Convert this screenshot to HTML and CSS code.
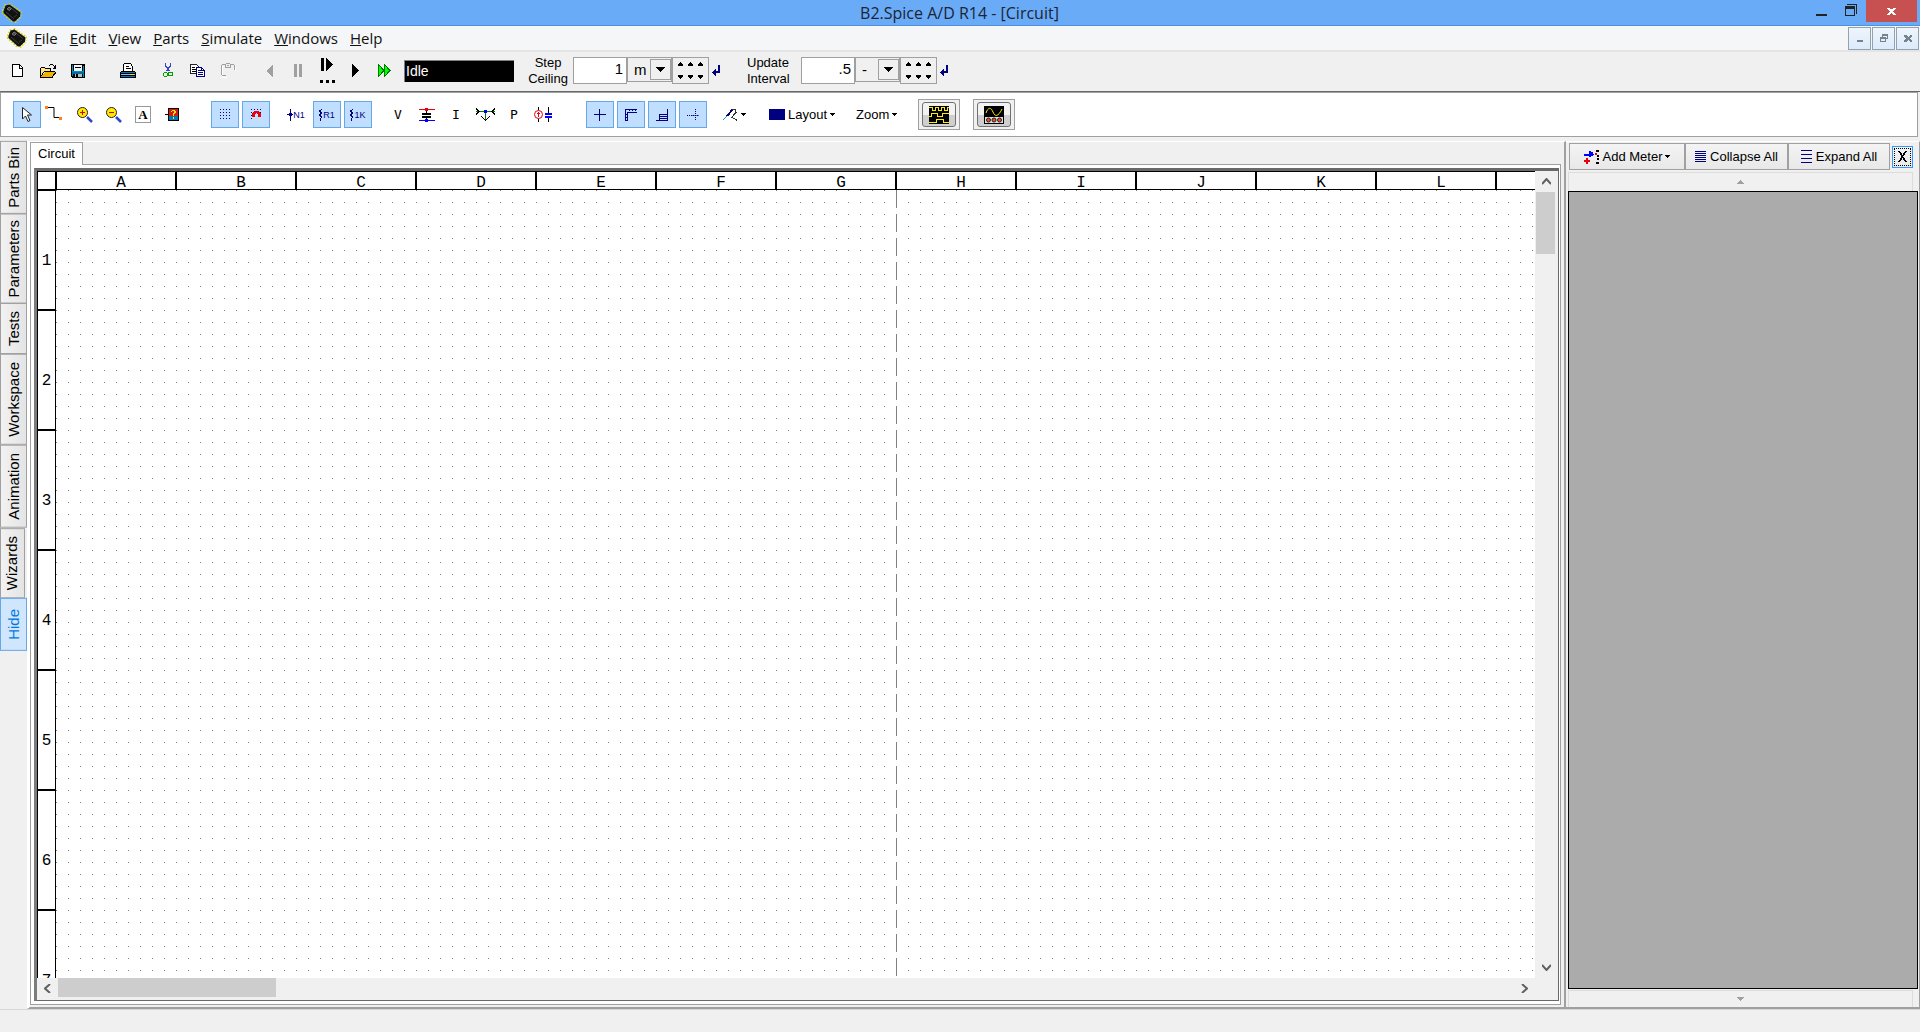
FILE: index.html
```html
<!DOCTYPE html>
<html lang="en">
<head>
    <meta charset="UTF-8">
    <meta name="viewport" content="width=device-width, initial-scale=1.0">
    <title>B2.Spice A/D R14 - [Circuit]</title>
    <link rel="stylesheet" href="styles.css">
</head>
<body>
    <svg class="defs" width="0" height="0" aria-hidden="true">
        <symbol id="chip" viewBox="0 0 20 20">
            <path d="M6.500 1 19.500 10M.5 9 11.500 19" stroke="#d8d000" stroke-width="3" stroke-dasharray="1.600 1.400"/>
            <path d="M.5 8 4 1M13 19.500l6.500-7" stroke="#e6dc00" stroke-width="2" stroke-dasharray="1.500 1.500"/>
            <path d="M1.500 8 3.500 2.500 7.500 1.500 18.500 9.500 18 13.500 13 18.500H11L1.500 10z" fill="#111"/>
            <path d="M5 6l2-2 2.500 1.500-2 2z" stroke="#777" fill="#444"/>
            <path d="M4 9l8 7M10 6l6 4.500M12 14l3-2" stroke="#3c3c3c"/>
        </symbol>
        <symbol id="up" viewBox="0 0 5 4"><path d="M2 0h1v1h1v1h1v2H0V2h1V1h1z"/></symbol>
        <symbol id="down" viewBox="0 0 5 4"><path d="M0 0h5v2H4v1H3v1H2V3H1V2H0z"/></symbol>
        <symbol id="drop" viewBox="0 0 9 5"><path d="M0 0h9v1H8v1H7v1H6v1H5v1H4V4H3V3H2V2H1V1H0z"/></symbol>
        <symbol id="caret" viewBox="0 0 5 3"><path d="M0 0h5v1H4v1H3v1H2V2H1V1H0z"/></symbol>
        <symbol id="enter" viewBox="0 0 9 11"><path d="M6 0h2v8H4v3H3v-1H2V9H1V8H0V7h1V6h1V5h1V4h1v2h2z" fill="#000080"/></symbol>
    </svg>

    <header class="titlebar">
        <svg class="chip" width="20" height="20"><use href="#chip"/></svg>
        <h1>B2.Spice A/D R14 - [Circuit]</h1>
        <div class="window-buttons">
            <button aria-label="Minimize"><svg width="11" height="12"><path d="M0 10h11v2H0z" fill="#222"/></svg></button>
            <button aria-label="Restore"><svg width="12" height="12"><path d="M2 0h10v10h-1V1H2zM0 2h10v10H0zM1 5v6h8V5z" fill="#222" fill-rule="evenodd"/></svg></button>
            <button class="close" aria-label="Close"><svg width="9" height="7"><path d="M0 0h3v1h3V0h3v1H8v1H7v1H6v1h1v1h1v1h1v1H6V6H5V5H4v1H3v1H0V6h1V5h1V4h1V3H2V2H1V1H0z" fill="#fff"/></svg></button>
        </div>
    </header>

    <nav class="menubar">
        <svg class="chip" width="20" height="20"><use href="#chip"/></svg>
        <a href="#file"><u>F</u>ile</a>
        <a href="#edit"><u>E</u>dit</a>
        <a href="#view"><u>V</u>iew</a>
        <a href="#parts"><u>P</u>arts</a>
        <a href="#simulate"><u>S</u>imulate</a>
        <a href="#windows"><u>W</u>indows</a>
        <a href="#help"><u>H</u>elp</a>
        <div class="child-buttons">
            <button aria-label="Minimize circuit"><svg width="6" height="8"><path d="M0 6h6v2H0z"/></svg></button>
            <button aria-label="Restore circuit"><svg width="8" height="8"><path d="M2 0h6v5H6V4h1V2H3v1H2zM0 3h6v5H0zM1 5v2h4V5z" fill-rule="evenodd"/></svg></button>
            <button aria-label="Close circuit"><svg width="8" height="7"><path d="M0 0h2l2 2 2-2h2v1L6 3.500 8 6v1H6L4 5 2 7H0V6l2-2.500L0 1z"/></svg></button>
        </div>
    </nav>

    <div class="toolbar main-toolbar">
        <div class="group file-group">
            <button aria-label="New"><svg width="12" height="14"><path d="M.5.500h7l3 3v9H.5z" fill="#fff" stroke="#000"/><path d="M7 1v3h4" fill="none" stroke="#000"/></svg></button>
            <button aria-label="Open"><svg width="16" height="14"><path d="M1 12V4h1V3h3v1h6v3H5z" fill="#ffe680"/><path d="M0 4h1v9H0zM1 3h4v1H1zM5 4h6v1H5zM10 5h1v2h-1zM4 7h11v1H4zM3 8h1v1H3zM2 9h1v2H2zM1 11h1v2H1z"/><path d="M5 8h10v1l-3 4H1l3-4z" fill="#f0b400"/><path d="M15 8h1v1l-3 4v1H0v-1h12zM9 1h1V0h3v1h1v1h1V1h1v4h-3V4h1V2h-1V1h-3v1H9z"/></svg></button>
            <button aria-label="Save"><svg width="14" height="14"><path d="M0 0h14v14H1l-1-1z"/><path d="M1 1h1v11H1zM12 2h1v11h-1zM2 7h10v1H2z" fill="#0090c0"/><path d="M3 1h8v6H3z" fill="#f4f4f4"/><path d="M1 8h12v2H1z" fill="#006eaa"/><path d="M4 10h7v3H4z" fill="#bbb"/><path d="M5 10h2v3H5zM4 3h6v1H4z"/></svg></button>
        </div>
        <div class="group">
            <button aria-label="Print"><svg width="16" height="16"><path d="M3 8V3l3-3h5l2 3v6H3z" fill="#fff"/><path d="M4 0h7v1H4zM3 1h1v7H3zM11 1h1v2h-1zM12 3h1v5h-1zM6 3h3v1H6zM6 5h5v1H6zM1 8h14v1h1v6H0V9h1z"/><path d="M1 9h14v1H1z" fill="#1070c0"/><path d="M1 11h14v1H1z" fill="#79bff0"/><path d="M10 11h4v1h-4z" fill="#ffe000"/><path d="M1 13h14v1H1z" fill="#1070c0"/></svg></button>
        </div>
        <div class="group edit-group">
            <button aria-label="Cut"><svg width="10" height="15"><path d="M2.500 0v3l4 5M7.500 0v3l-4 5" stroke="#3346c8" fill="none" stroke-width="1.400"/><circle cx="2.500" cy="11.500" r="2" stroke="#00a000" fill="none"/><circle cx="7.500" cy="11" r="2" stroke="#00a000" fill="none"/></svg></button>
            <button aria-label="Copy"><svg width="16" height="14"><path d="M.5.500h6l2 2v7h-8z" fill="#fff" stroke="#222"/><path d="M2 3h3v1H2zM2 5h4v1H2zM2 7h4v1H2z"/><path d="M6.500 3.500h5l3 3v6h-8z" fill="#fff" stroke="#000080"/><path d="M8 6h3v1H8zM8 8h5v1H8zM8 10h5v1H8zM11 4v3h3V6h-2V4z" fill="#000080"/></svg></button>
            <button aria-label="Paste" disabled><svg width="15" height="15"><path d="M1 3h1v11h4v1H1zM14 4h1v4h-1z" fill="#fff"/><path d="M0 2h1v10H0zM1 1h3v1H1zM10 1h3v1h-3zM13 2h1v5h-1zM5 0h4v1H5zM4 1h1v3H4zM9 1h1v3H9zM4 4h6v1H4zM1 12h4v1H1zM6 2h2v1H6z" fill="#a0a0a0"/></svg></button>
        </div>
        <div class="group run-group">
            <button aria-label="Step back" disabled><svg width="8" height="14"><path d="M7 1v13H6z" fill="#fff"/><path d="M0 7l7-7v13z" fill="#a0a0a0"/></svg></button>
            <button aria-label="Pause" disabled><svg width="9" height="13"><path d="M0 0h3v13H0zM5 0h3v13H5z" fill="#a0a0a0"/></svg></button>
            <button class="step" aria-label="Step"><svg width="15" height="25"><path d="M1 0h3v13H1zM6 0l7 6v1l-7 6zM0 22h3v3H0zM6 22h3v3H6zM12 22h3v3h-3z"/></svg></button>
            <button aria-label="Run"><svg width="8" height="13"><path d="M0 0l7 6v1l-7 6z"/></svg></button>
            <button aria-label="Fast run"><svg width="13" height="13"><path d="M.5.500L6 6.500l-5.500 6zM6.500.500l5.500 6-5.500 6z" fill="#0f0" stroke="#007800"/></svg></button>
        </div>
        <input class="status" type="text" value="Idle" aria-label="Status" readonly>
        <label for="step">Step<br>Ceiling</label>
        <div class="stepper">
            <input id="step" type="text" value="1">
            <span class="unit">
                <select aria-label="Step unit"><option>m</option></select>
                <svg width="9" height="5"><use href="#drop"/></svg>
            </span>
            <span class="spin">
                <button aria-label="Step up, coarse"><svg width="5" height="4"><use href="#up"/></svg></button>
                <button aria-label="Step up"><svg width="5" height="4"><use href="#up"/></svg></button>
                <button aria-label="Step up, fine"><svg width="5" height="4"><use href="#up"/></svg></button>
                <button aria-label="Step down, coarse"><svg width="5" height="4"><use href="#down"/></svg></button>
                <button aria-label="Step down"><svg width="5" height="4"><use href="#down"/></svg></button>
                <button aria-label="Step down, fine"><svg width="5" height="4"><use href="#down"/></svg></button>
            </span>
            <button class="enter" aria-label="Apply step"><svg width="9" height="11"><use href="#enter"/></svg></button>
        </div>
        <label class="update-label" for="update">Update<br>Interval</label>
        <div class="stepper">
            <input id="update" type="text" value=".5">
            <span class="unit">
                <select aria-label="Update unit"><option>-</option></select>
                <svg width="9" height="5"><use href="#drop"/></svg>
            </span>
            <span class="spin">
                <button aria-label="Update up, coarse"><svg width="5" height="4"><use href="#up"/></svg></button>
                <button aria-label="Update up"><svg width="5" height="4"><use href="#up"/></svg></button>
                <button aria-label="Update up, fine"><svg width="5" height="4"><use href="#up"/></svg></button>
                <button aria-label="Update down, coarse"><svg width="5" height="4"><use href="#down"/></svg></button>
                <button aria-label="Update down"><svg width="5" height="4"><use href="#down"/></svg></button>
                <button aria-label="Update down, fine"><svg width="5" height="4"><use href="#down"/></svg></button>
            </span>
            <button class="enter" aria-label="Apply update"><svg width="9" height="11"><use href="#enter"/></svg></button>
        </div>
    </div>

    <div class="toolbar draw-toolbar">
        <div class="group pointer-group">
            <button class="on" aria-label="Select"><svg width="10" height="16"><path d="M.5.500v11.500l3-3 2.500 5.500 2-1-2.500-5.500H9.500z" fill="#fff" stroke="#222"/></svg></button>
            <button aria-label="Wire"><svg class="raise" width="18" height="20"><path d="M3 2.500h6v10h5" fill="none" stroke="#000"/><path d="M0 1h3v3H0zM14 12h3v3h-3z" fill="#ff7f27"/></svg></button>
            <button aria-label="Zoom in"><svg width="16" height="16"><path d="M10 10l5 5" stroke="#3346c8" stroke-width="2.500"/><circle cx="5.500" cy="5.500" r="5" fill="#ffee00" stroke="#222"/><path d="M5 3h1v2h2v1H6v2H5V6H3V5h2z" fill="#e00000"/></svg></button>
            <button aria-label="Zoom out"><svg width="16" height="16"><path d="M10 10l5 5" stroke="#3346c8" stroke-width="2.500"/><circle cx="5.500" cy="5.500" r="5" fill="#ffee00" stroke="#222"/><path d="M3 5h5v1H3z" fill="#e00000"/></svg></button>
            <button class="text-tool" aria-label="Text"><span>A</span></button>
            <button aria-label="Find part"><svg width="14" height="13"><path d="M0 6h4v1H0zM3 0h11v13H3z"/><path d="M4 1h9v7H4z" fill="#d81818"/><path d="M4 8h9v4H4z" fill="#0078b4"/><path d="M6 3h1V2h3v1h1v2h-1v1H9v2H8V5h1V3H7v1H6zM8 9h1v2H8z" fill="#ffe600"/></svg></button>
        </div>
        <div class="group grid-group">
            <button class="on" aria-label="Show grid"><svg width="11" height="11"><path d="M.5 0v11M3.500 0v11M6.500 0v11M9.500 0v11" stroke="#000080" stroke-dasharray="1 2"/></svg></button>
            <button class="on" aria-label="Snap to grid"><svg width="11" height="11"><path d="M.5 0v11M3.500 0v11M6.500 0v11M9.500 0v11" stroke="#000080" stroke-dasharray="1 2"/><path d="M1 9V4h1V3h1V2h5v1h1v1h1v5H7V5H6V4H5v1H4v4z" fill="#e8000c"/><path d="M4 5h3v5H4z" fill="#c0deff"/><path d="M1 8h3v2H1zM7 8h3v2H7z" fill="#d8d8e8"/></svg></button>
        </div>
        <div class="group name-group">
            <button aria-label="Node names"><svg width="6" height="12"><path d="M3 0h1v12H3zM0 5h6v1H0zM2 4h3v3H2z" fill="#000080"/></svg><span>N1</span></button>
            <button class="on" aria-label="Part names"><svg width="4" height="12"><path d="M2 0v1l-2 1 3 2-3 2 3 2-2 2v2" fill="none" stroke="#000080"/></svg><span>R1</span></button>
            <button class="on" aria-label="Part values"><svg width="4" height="12"><path d="M2 0v1l-2 1 3 2-3 2 3 2-2 2v2" fill="none" stroke="#000080"/></svg><span>1K</span></button>
        </div>
        <div class="group probe-group">
            <button>V</button>
            <button aria-label="Voltage difference"><svg width="16" height="14"><path d="M0 1h16v1H0zM6 0h3v3H6z" fill="#e8000c"/><path d="M7 3h1v2H7zM3 5h9v2H3zM3 8h9v2H3zM7 10h1v2H7z"/><path d="M0 12h16v1H0zM6 11h3v3H6z" fill="#0000ff"/></svg></button>
            <button>I</button>
            <button aria-label="Branch current"><svg width="21" height="14"><path d="M1 3h19v1H1zM10 4h1v9h-1z" fill="#008000"/><path d="M1 .500l3 3-3 3M20 .500l-3 3 3 3M6 8l4.500 4.500L15 8" fill="none" stroke="#000"/><path d="M9 2h3v3H9z" fill="#0000ff"/></svg></button>
            <button>P</button>
            <button aria-label="Device power"><svg width="18" height="15"><path d="M4 0h1v4H4zM4 11h1v4H4zM14 0h1v7h-1zM14 10h1v5h-1z"/><circle cx="4.500" cy="7.500" r="4" fill="#fff" stroke="#e8000c" shape-rendering="auto"/><path d="M4 5h1v5H4zM3 6h3v1H3z" fill="#e8000c"/><path d="M11 6h7v2h-7zM11 9h7v2h-7z" fill="#0000ff"/></svg></button>
        </div>
        <div class="group view-group">
            <button class="on" aria-label="Crosshair"><svg width="12" height="12"><path d="M5 0h1v12H5zM0 5h12v1H0z" fill="#000080"/></svg></button>
            <button class="on" aria-label="Rulers"><svg width="12" height="12"><path d="M0 0h12v4H3v8H0zM1 1v10h1V9H1V8h1V6H1V5h1V3h10V1h-1v1h-1V1H8v1H7V1H5v1H4V1z" fill="#000080" fill-rule="evenodd"/></svg></button>
            <button class="on" aria-label="Title block"><svg width="13" height="12"><path d="M11 0h1v12H0v-1h11v-1H4V9h7V8H4V7h7V6H4V5h7zM3 5h1v7H3z" fill="#000080"/></svg></button>
            <button class="on" aria-label="Snap lines"><svg width="12" height="12"><path d="M0 6.500h12" stroke="#000080" stroke-dasharray="1 1"/><path d="M8.500 0v12" stroke="#000080" stroke-dasharray="1 1"/><path d="M4 6h8v1H4z" fill="#000080" opacity=".5"/></svg></button>
        </div>
        <button class="menu-button" aria-label="Probes"><svg width="15" height="12"><path d="M0 11l4-4" stroke="#00a0a0"/><path d="M4 7l6-7" stroke="#000080" stroke-width="2"/><path d="M9 .500h3l1 3-2 2-2 3 4 2v2" fill="none" stroke="#333"/></svg><svg width="5" height="3"><use href="#caret"/></svg></button>
        <button class="menu-button layout-button"><svg width="16" height="11"><path d="M0 0h16v11H0z" fill="#000080"/></svg>Layout<svg width="5" height="3"><use href="#caret"/></svg></button>
        <button class="menu-button">Zoom<svg width="5" height="3"><use href="#caret"/></svg></button>
        <div class="group scope-group">
            <button aria-label="Logic analyzer"><span><svg width="20" height="18"><path d="M0 0h20v18H0z"/><path d="M0 1.500h3v3h3v-3h3v3h3v-3h3v3h3v-3h2M0 10.500h2v-3h6v3h5v-3h7M0 16.500h7v-3h7v3h6" fill="none" stroke="#ffee00"/></svg></span></button>
            <button aria-label="Oscilloscope"><span><svg width="20" height="18"><path d="M0 0h20v18H0z"/><path d="M1 11h18v6H1z" fill="#ddd"/><g shape-rendering="auto"><path d="M2 7c2-6 5-6 7-1s5 5 9-3" fill="none" stroke="#ffee00"/><circle cx="4.500" cy="14" r="2" fill="#f05020" stroke="#222"/><circle cx="10" cy="14" r="2" fill="#f05020" stroke="#222"/><circle cx="15.500" cy="14" r="2" fill="#f05020" stroke="#222"/></g></svg></span></button>
        </div>
    </div>

    <main class="workspace">
        <nav class="side-tabs">
            <button class="tight">Parts Bin</button>
            <button class="tight">Parameters</button>
            <button>Tests</button>
            <button>Workspace</button>
            <button>Animation</button>
            <button class="narrow">Wizards</button>
            <button class="hide">Hide</button>
        </nav>

        <section class="document">
            <div class="doc-tabs"><button>Circuit</button></div>
            <div class="page">
                <div class="view">
                    <div class="corner"></div>
                    <div class="columns">
                        <span>A</span><span>B</span><span>C</span><span>D</span><span>E</span><span>F</span><span>G</span><span>H</span><span>I</span><span>J</span><span>K</span><span>L</span>
                    </div>
                    <div class="rows">
                        <span>1</span><span>2</span><span>3</span><span>4</span><span>5</span><span>6</span><span>7</span>
                    </div>
                    <svg class="canvas">
                        <!-- page boundary -->
                        <line x1="840.500" y1="0" x2="840.500" y2="100%" stroke="#808080" stroke-dasharray="18 6"/>
                    </svg>
                    <div class="scroll vertical">
                        <button aria-label="Scroll up"><svg width="9" height="7"><path d="M0 6l4.500-5L9 6" /></svg></button>
                        <div class="thumb"></div>
                        <button class="end" aria-label="Scroll down"><svg width="9" height="7"><path d="M0 1l4.500 5L9 1" /></svg></button>
                    </div>
                    <div class="scroll horizontal">
                        <button aria-label="Scroll left"><svg width="7" height="9"><path d="M6 0L1 4.500 6 9" /></svg></button>
                        <div class="thumb"></div>
                        <button class="end" aria-label="Scroll right"><svg width="7" height="9"><path d="M1 0l5 4.500L1 9" /></svg></button>
                    </div>
                </div>
            </div>
        </section>

        <aside class="meters">
            <div class="meter-buttons">
                <button class="add"><svg width="16" height="14"><path d="M0 4h5V1h2v1h2v2h1v1H9v1H7v1H5V6H0z" fill="#0000ff"/><path d="M0 10h2V8h2v2h2v2H4v2H2v-2H0zM11 3h2v2h-2z" fill="#e8000c"/><path d="M12 0h3v2h-3zM13 5h2v2h-2zM13 8h2v2h-2zM12 12h3v2h-3z"/></svg>Add Meter<svg width="5" height="3"><use href="#caret"/></svg></button>
                <button class="collapse"><svg width="11" height="12"><path d="M0 0h11v1H0zM0 2h11v1H0zM0 4h11v1H0zM0 6h11v1H0zM0 8h11v1H0zM0 10h11v1H0z" fill="#000080"/></svg>Collapse All</button>
                <button class="expand"><svg width="11" height="13"><path d="M0 0h11v1H0zM0 4h11v1H0zM0 8h11v1H0zM0 12h11v1H0z" fill="#000080"/></svg>Expand All</button>
                <button class="close-meters" aria-label="Close meters"><span><svg width="9" height="11"><path d="M0 0h2l2.500 4L7 0h2L5.500 5.500 9 11H7L4.500 7 2 11H0l3.500-5.500z"/></svg></span></button>
            </div>
            <button class="strip" aria-label="Scroll meters up"><svg width="7" height="4"><path d="M3 0h1v1h1v1h1v1h1v1H0V3h1V2h1V1h1z"/></svg></button>
            <div class="meter-list"></div>
            <button class="strip bottom" aria-label="Scroll meters down"><svg width="7" height="4"><path d="M0 0h7v1H6v1H5v1H4v1H3V3H2V2H1V1H0z"/></svg></button>
        </aside>
    </main>

    <footer class="statusbar"></footer>
</body>
</html>
```
FILE: styles.css
```css
* {
    box-sizing: border-box;
}
body {
    margin: 0;
    height: 100vh;
    display: flex;
    flex-direction: column;
    overflow: hidden;
    background-color: #f0f0f0;
    color: #000;
    font-family: "Liberation Sans", Arial, sans-serif;
    font-size: 13px;
    line-height: 16px;
}
button {
    display: flex;
    align-items: center;
    justify-content: center;
    padding: 0;
    border: 0;
    background: none;
    color: inherit;
    font: inherit;
    flex: none;
}
svg {
    display: block;
    flex: none;
    shape-rendering: crispEdges;
}
.defs {
    position: absolute;
}
.chip {
    shape-rendering: auto;
}

/* Title bar */
.titlebar {
    flex: none;
    display: grid;
    grid-template-columns: 1fr auto 1fr;
    align-items: center;
    height: 26px;
    padding: 0 3px 0 2px;
    background-color: #6aabf7;
    border-bottom: 1px solid #4f8fdd;
}
.titlebar h1 {
    margin: 0;
    font-family: "Open Sans", "Noto Sans", sans-serif;
    font-size: 16px;
    font-weight: normal;
    line-height: 20px;
    color: #1b2433;
}
.window-buttons {
    display: flex;
    justify-content: flex-end;
    height: 25px;
}
.window-buttons button {
    width: 29px;
    height: 20px;
}
.window-buttons .close {
    width: 51px;
    height: 22px;
    margin-left: 1px;
    background-color: #c75050;
}

/* Menu bar */
.menubar {
    flex: none;
    display: flex;
    align-items: center;
    gap: 12px;
    height: 26px;
    padding-left: 7px;
    background-color: #f5f6f7;
    border-bottom: 2px solid #e4e4e4;
    font-family: "Open Sans", "Noto Sans", sans-serif;
    font-size: 15px;
    line-height: 20px;
}
.menubar a {
    color: #111;
    text-decoration: none;
}
.menubar .chip {
    margin-right: -5px;
}
.child-buttons {
    display: flex;
    gap: 1px;
    margin-left: auto;
    padding-right: 1px;
}
.child-buttons button {
    width: 23px;
    height: 23px;
    border: 1px solid #93a2b3;
    background: linear-gradient(#eef5fc, #dcebfa);
}
.child-buttons path {
    fill: #76838f;
}

/* Toolbars */
.toolbar {
    flex: none;
    display: flex;
    align-items: center;
}
.group {
    display: flex;
    align-items: center;
}
.main-toolbar {
    height: 40px;
    padding: 0 0 2px 3px;
    border-bottom: 1px solid #696969;
}
.main-toolbar .group {
    margin-right: 10px;
}
.main-toolbar .group button {
    width: 30px;
    height: 30px;
}
.main-toolbar .file-group {
    margin-right: 20px;
}
.main-toolbar .edit-group {
    margin-right: 13px;
}
.main-toolbar .run-group {
    margin-right: 6px;
}
.main-toolbar .run-group button {
    width: 28px;
}
.main-toolbar .run-group .step {
    width: 30px;
}
.status {
    width: 110px;
    height: 22px;
    padding: 0 1px;
    border: 1px solid #808080;
    border-width: 1px 0 0 1px;
    background-color: #000;
    color: #fff;
    font: 14px "Liberation Sans", Arial, sans-serif;
}
.main-toolbar label {
    width: 59px;
    padding-left: 9px;
    text-align: center;
}
.main-toolbar .update-label {
    width: 78px;
    padding-left: 24px;
    text-align: left;
}
.stepper {
    display: flex;
    align-items: flex-start;
}
.stepper input {
    width: 54px;
    height: 27px;
    padding: 0 3px 4px 0;
    border: 1px solid #a0a0a0;
    background-color: #fff;
    font: 15px "Liberation Sans", Arial, sans-serif;
    text-align: right;
}
.unit {
    position: relative;
    width: 45px;
}
.unit select {
    appearance: none;
    width: 100%;
    height: 25px;
    padding: 0 0 0 6px;
    border: 1px solid #a0a0a0;
    border-radius: 0;
    background-color: #f0f0f0;
    color: #000;
    font: 15px "Liberation Sans", Arial, sans-serif;
}
.unit svg {
    position: absolute;
    top: 2px;
    right: 1px;
    width: 21px;
    height: 21px;
    padding: 7px 5px;
    border: 1px solid #a0a0a0;
    pointer-events: none;
}
.spin {
    display: grid;
    grid-template-columns: repeat(3, 1fr);
    width: 37px;
    height: 27px;
    padding: 0 2px;
    border: 1px solid #a0a0a0;
}
.enter {
    width: 14px;
    height: 27px;
}

.draw-toolbar {
    height: 45px;
    margin-right: 2px;
    padding-left: 12px;
    border: 1px solid #a0a0a0;
    background-color: #fff;
}
.draw-toolbar .group button {
    width: 28px;
    height: 27px;
}
.draw-toolbar .on {
    border: 1px solid #66a7e8;
    background-color: #c0deff;
}
.pointer-group {
    gap: 1px;
    margin-right: 25px;
}
.pointer-group svg {
    shape-rendering: auto;
}
.pointer-group .raise {
    margin-right: 4px;
}
.text-tool span {
    width: 16px;
    height: 17px;
    border: 1px solid #999;
    font: bold 13px/15px "Liberation Serif", serif;
}
.grid-group {
    gap: 3px;
    margin-right: 12px;
}
.name-group {
    gap: 3px;
    margin-right: 12px;
    color: #000080;
    font: 9px/12px "Liberation Sans Narrow", "Liberation Sans", sans-serif;
}
.probe-group {
    gap: 1px;
    margin-right: 29px;
    font: 13px/16px "DejaVu Sans Mono", monospace;
}
.view-group {
    gap: 3px;
    margin-right: 16px;
}
.menu-button {
    gap: 3px;
    height: 27px;
    margin-right: 21px;
}
.draw-toolbar .layout-button {
    margin-left: 2px;
}
.scope-group {
    gap: 13px;
}
.draw-toolbar .scope-group button {
    width: 42px;
    height: 31px;
    border: 1px solid #a0a0a0;
    background-color: #f0f0f0;
}
.scope-group span {
    display: flex;
    align-items: center;
    justify-content: center;
    width: 34px;
    height: 25px;
    border: 1px solid #707070;
    border-radius: 3px;
    background: linear-gradient(#f2f2f2 50%, #cfcfcf 50%);
}

/* Work area */
.workspace {
    flex: 1;
    min-height: 0;
    display: grid;
    grid-template-columns: 27px 1fr 354px;
    padding-top: 4px;
}
.side-tabs button {
    width: 27px;
    padding: 7px 0;
    border: 1px solid #a0a0a0;
    background: linear-gradient(90deg, #e4e4e4, #f2f2f2);
    font-size: 15px;
    line-height: 25px;
    writing-mode: vertical-rl;
    transform: rotate(180deg);
}
.side-tabs .tight {
    padding: 5px 0;
}
.side-tabs .narrow {
    width: 25px;
    padding-left: 2px;
    line-height: 21px;
}
.side-tabs .hide {
    padding: 10px 0;
    border-color: #66a7e8;
    background: #cfe6fc;
    color: #0078e0;
}

.document {
    min-width: 0;
    min-height: 0;
    display: flex;
    flex-direction: column;
    padding-bottom: 2px;
    border: 2px solid #a0a0a0;
    border-top: 1px solid #fff;
    border-left: 3px solid #fff;
}
.doc-tabs {
    flex: none;
    display: flex;
    height: 23px;
    margin-right: 3px;
    box-shadow: inset 0 -1px #a0a0a0;
}
.doc-tabs button {
    width: 53px;
    padding-bottom: 1px;
    border: 1px solid #a0a0a0;
    border-bottom: 0;
    background-color: #fff;
}
.page {
    flex: 1;
    min-height: 0;
    display: flex;
    margin-right: 3px;
    padding: 3px 1px 3px 3px;
    border: 1px solid #a0a0a0;
    border-top: 0;
    background-color: #fff;
}
.view {
    flex: 1;
    min-width: 0;
    display: grid;
    grid-template-columns: 19px minmax(0, 1fr) 23px;
    grid-template-rows: 19px minmax(0, 1fr) 22px;
    border: 3px solid #7c7c7c;
    border-top-color: #696969;
    border-right: 1px solid #696969;
    border-bottom: 1px solid #696969;
    background-color: #f0f0f0;
}
.corner {
    border: 1px solid #000;
    background-color: #fff;
}
.columns,
.rows {
    background-color: #fff;
    font: 16px/18px "Liberation Mono", "Courier New", monospace;
    text-align: center;
}
.columns {
    display: flex;
    overflow-x: clip;
    border: 1px solid #000;
    border-right: 0;
}
.columns span {
    flex: none;
    width: 120px;
    height: 17px;
    padding: 2px 0 0 10px;
    border-right: 2px solid #000;
}
.rows {
    overflow: hidden;
    border: 1px solid #000;
    border-bottom: 0;
}
.rows span {
    display: flex;
    align-items: center;
    justify-content: center;
    height: 120px;
    padding-top: 22px;
    border-bottom: 2px solid #000;
}
/* one grey dot every 12px */
.canvas {
    width: 100%;
    height: 100%;
    background-image:
        linear-gradient(transparent 1px, #fff 1px),
        linear-gradient(90deg, #808080 1px, #fff 1px);
    background-size: 12px 12px;
}
.scroll {
    display: flex;
    background-color: #f0f0f0;
}
.scroll button {
    width: 21px;
    height: 21px;
}
.scroll path {
    fill: none;
    stroke: #606060;
    stroke-width: 2;
    shape-rendering: auto;
}
.scroll .end {
    margin: auto 0 0 auto;
}
.thumb {
    background-color: #cdcdcd;
}
.vertical {
    grid-area: 1 / 3 / 3 / 4;
    flex-direction: column;
    padding-left: 1px;
}
.vertical .thumb {
    width: 19px;
    height: 62px;
}
.vertical .end {
    margin-left: 0;
}
.horizontal {
    grid-area: 3 / 1 / 4 / 3;
}
.horizontal .thumb {
    width: 218px;
    height: 19px;
}
.horizontal .end {
    margin-top: 0;
}

/* Meter panel */
.meters {
    display: flex;
    flex-direction: column;
    padding: 0 1px 0 2px;
    border: 1px solid #a0a0a0;
    border-top: 1px solid #fff;
    border-left: 0;
    border-bottom: 2px solid #a0a0a0;
}
.meter-buttons {
    flex: none;
    display: flex;
    align-items: center;
    height: 27px;
    margin: 1px 0 2px 1px;
}
.meter-buttons button {
    height: 27px;
    border: 1px solid #a0a0a0;
    background: linear-gradient(#f4f4f4, #e8e8e8);
}
.meter-buttons .add {
    width: 116px;
    gap: 3px;
}
.meter-buttons .collapse {
    width: 103px;
    gap: 4px;
}
.meter-buttons .expand {
    width: 102px;
    gap: 4px;
}
.meter-buttons .close-meters {
    width: 21px;
    height: 22px;
    margin-left: 2px;
    border-color: #3399ff;
}
.close-meters span {
    display: flex;
    align-items: center;
    justify-content: center;
    width: 17px;
    height: 18px;
    border: 1px dotted #000;
}
.strip {
    height: 19px;
    margin-right: 5px;
    border: 1px solid #dcdcdc;
    border-bottom: 0;
}
.strip path {
    fill: #a0a0a0;
}
.meter-list {
    flex: 1;
    margin-bottom: 1px;
    border: 1px solid #000;
    background-color: #ababab;
}
.strip.bottom {
    height: 17px;
}

.statusbar {
    flex: none;
    height: 23px;
    border-top: 1px solid #d7d7d7;
}
```
